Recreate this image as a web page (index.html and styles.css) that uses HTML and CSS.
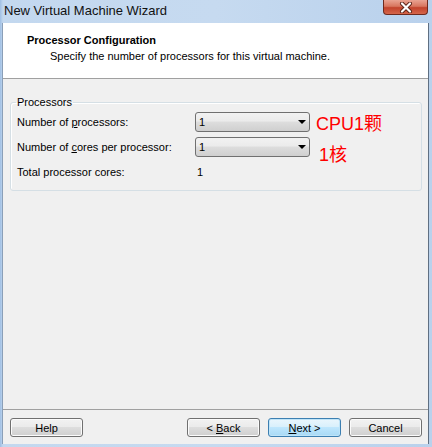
FILE: index.html
```html
<!DOCTYPE html>
<html lang="en">
<head>
    <meta charset="UTF-8">
    <meta name="viewport" content="width=device-width, initial-scale=1.0">
    <title>New Virtual Machine Wizard</title>
    <link rel="stylesheet" href="styles.css">
</head>
<body>
    <div class="window">
        <div class="titlebar">
            <span class="title">New Virtual Machine Wizard</span>
            <div class="close">
                <svg width="16" height="11" viewBox="0 0 16 11">
                    <path d="M4 1.5 L12 9.5 M12 1.5 L4 9.5" stroke="#5a2418" stroke-width="4" stroke-linecap="round"/>
                    <path d="M4 1.5 L12 9.5 M12 1.5 L4 9.5" stroke="#ffffff" stroke-width="2.2" stroke-linecap="round"/>
                </svg>
            </div>
        </div>
        <div class="client">
            <div class="header">
                <div class="header-title">Processor Configuration</div>
                <div class="header-sub">Specify the number of processors for this virtual machine.</div>
            </div>
            <fieldset class="group">
                <legend>Processors</legend>
                <div class="row">
                    <span class="label">Number of <u>p</u>rocessors:</span>
                    <div class="select"><span>1</span><span class="arrow"></span></div>
                    <span class="note">CPU1颗</span>
                </div>
                <div class="row">
                    <span class="label">Number of <u>c</u>ores per processor:</span>
                    <div class="select"><span>1</span><span class="arrow"></span></div>
                    <span class="note note-cores">1核</span>
                </div>
                <div class="row total">
                    <span class="label">Total processor cores:</span>
                    <span class="value">1</span>
                </div>
            </fieldset>
            <div class="footer">
                <button class="btn">Help</button>
                <div class="spacer"></div>
                <button class="btn">&lt; <u>B</u>ack</button>
                <button class="btn btn-default"><u>N</u>ext &gt;</button>
                <button class="btn">Cancel</button>
            </div>
        </div>
    </div>
</body>
</html>
```

FILE: styles.css
```css
body {
    margin: 0;
    font-family: "Liberation Sans", Arial, sans-serif;
    font-size: 11px;
    color: #000;
}
.window {
    width: 432px;
    height: 447px;
    box-sizing: border-box;
    padding: 0 4px 3px 3px;
    display: flex;
    flex-direction: column;
    background: linear-gradient(to right, #9fbfe4 0, #c3d8ef 3px, #c6daf0 50%, #b9d1ec 100%);
}
.titlebar {
    height: 23px;
    display: flex;
    align-items: flex-start;
}
.title {
    font-size: 13px;
    line-height: 21px;
    padding-left: 1px;
    color: #111;
}
.close {
    margin-left: auto;
    width: 43px;
    height: 14px;
    border: 1px solid #6e2a1e;
    border-top: none;
    border-radius: 0 0 4px 4px;
    background: linear-gradient(#e9a392 0, #d8765f 45%, #c2432c 55%, #d5664a 100%);
    display: flex;
    align-items: center;
    justify-content: center;
}
.client {
    flex: 1;
    display: flex;
    flex-direction: column;
    background: #f0f0f0;
    border-left: 1px solid #8a9fb8;
    border-right: 1px solid #5f6f82;
    margin-left: -1px;
    margin-right: -1px;
}
.header {
    height: 55px;
    background: #fff;
    border-bottom: 1px solid #a0a0a0;
    box-sizing: content-box;
    padding-left: 24px;
}
.header-title {
    font-weight: bold;
    margin-top: 11px;
    line-height: 13px;
}
.header-sub {
    margin-top: 3px;
    padding-left: 23px;
    line-height: 13px;
}
.group {
    margin: 17px 6px 0 7px;
    padding: 4px 6px 11px;
    border: 1px solid #d5dfe5;
    border-radius: 3px;
    box-shadow: inset 1px 1px 0 #fff;
}
.group legend {
    padding: 0 1px;
    margin-left: -1px;
    line-height: 12px;
}
.row {
    display: flex;
    align-items: center;
    height: 20px;
    margin-bottom: 5px;
}
.row.total {
    height: 14px;
    margin-top: 8px;
    margin-bottom: 0;
}
.label {
    width: 178px;
}
.value {
    padding-left: 2px;
}
.select {
    width: 115px;
    height: 20px;
    box-sizing: border-box;
    border: 1px solid #707070;
    border-radius: 3px;
    background: linear-gradient(#f2f2f2 0, #ebebeb 45%, #dddddd 50%, #cfcfcf 100%);
    display: flex;
    align-items: center;
    padding-left: 3px;
    padding-right: 3px;
}
.arrow {
    margin-left: auto;
    width: 0;
    height: 0;
    border-left: 4px solid transparent;
    border-right: 4px solid transparent;
    border-top: 4px solid #000;
}
.note {
    margin-left: 6px;
    color: #ff0000;
    font-size: 18px;
    font-family: "Liberation Sans", "Noto Sans CJK SC", sans-serif;
}
.note-cores {
    margin-left: 9px;
    margin-top: 12px;
}
.footer {
    margin-top: auto;
    border-top: 1px solid #a0a0a0;
    padding: 8px 6px 7px 7px;
    display: flex;
    gap: 8px;
}
.spacer {
    flex: 1;
}
.btn {
    width: 73px;
    height: 19px;
    padding: 0;
    font-family: "Liberation Sans", Arial, sans-serif;
    font-size: 11px;
    color: #000;
    border: 1px solid #707070;
    border-radius: 3px;
    background: linear-gradient(#f2f2f2 0, #ebebeb 45%, #dddddd 50%, #cfcfcf 100%);
    box-shadow: inset 0 0 0 1px #fbfbfb;
}
.btn-default {
    border-color: #3c7fb1;
    background: linear-gradient(#eaf6fd 0, #d9f0fc 45%, #bee6fd 50%, #a7d9f5 100%);
    box-shadow: inset 0 0 0 1px #bfe4f8;
}
```
